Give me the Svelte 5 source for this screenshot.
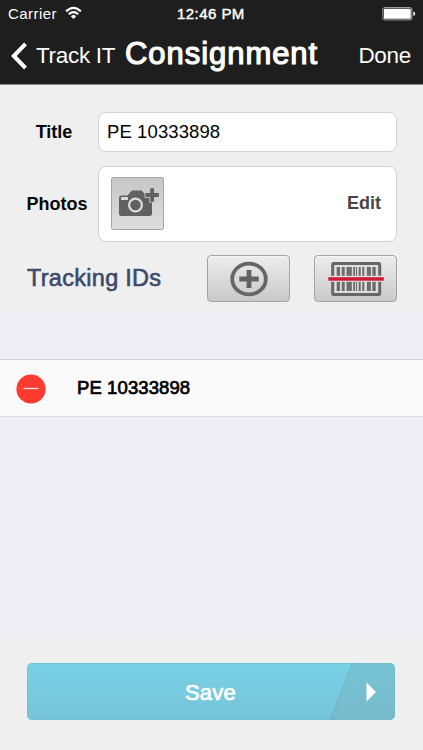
<script>
  const reference = 'PE 10333898';
  const bars = [
    [0, 3.3], [5, 3], [9.8, 5.3], [16.5, 1.8], [19.2, 1.2], [22, 2], [25.6, 2], [30.2, 4], [35.7, 3.3]
  ];
</script>

<div class="app">
  <header>
    <div class="status">
      <span class="carrier">Carrier</span>
      <svg class="wifi" width="17" height="14" viewBox="0 0 17 14">
        <g fill="none" stroke="#fff" stroke-width="2.2">
          <path d="M1.1 5.400Q8.500-1.700 15.900 5.400" />
          <path d="M3.800 8.300Q8.500 4 13.200 8.300" />
        </g>
        <path d="M5.800 10.200Q8.500 8 11.200 10.200L8.500 13Z" fill="#fff" />
      </svg>
      <span class="time">12:46 PM</span>
      <svg class="battery" width="34" height="14" viewBox="0 0 34 14">
        <rect x=".9" y=".6" width="29" height="12.3" rx="1.7" fill="none" stroke="#aaa" />
        <rect x="2" y="1.8" width="26.8" height="10" rx=".6" fill="#fff" />
        <path d="M31.4 4.500Q33.200 5 33.200 6.800T31.400 9Z" fill="#fff" />
      </svg>
    </div>
    <nav>
      <svg class="back" width="17" height="28" viewBox="0 0 17 28">
        <path d="M15.500 1.800L3.800 14L15.500 26" fill="none" stroke="#fff" stroke-width="4" />
      </svg>
      <span class="backtext">Track IT</span>
      <span class="heading">Consignment</span>
      <span class="done">Done</span>
    </nav>
  </header>

  <section class="form">
    <div class="line title">
      <span class="label">Title</span>
      <div class="field">{reference}</div>
    </div>
    <div class="line photos">
      <span class="label">Photos</span>
      <div class="field">
        <div class="camera">
          <svg width="53" height="53" viewBox="0 0 53 53">
            <path d="M10 18.500h6.500l4.500-5h9.500l4.500 4.500h4q2 0 2 2v16.500q0 2.500-2.500 2.500H10.500q-2.500 0-2.500-2.500V21q0-2.500 2-2.500Z" fill="#616161" />
            <rect x="10" y="20" width="7" height="3" rx=".5" fill="#ddd" />
            <circle cx="24.500" cy="28" r="6.400" fill="#616161" stroke="#ddd" stroke-width="2.200" />
            <path d="M39.200 11.200h3.900v4.800h4.800v3.900h-4.800v4.800h-3.900v-4.800h-4.800v-3.900h4.800Z" fill="#616161" stroke="#d0d0d0" stroke-width="1.600" paint-order="stroke" />
          </svg>
        </div>
        <span class="edit">Edit</span>
      </div>
    </div>
    <div class="line tracking">
      <span class="ids">Tracking IDs</span>
      <div class="tool">
        <svg width="40" height="36" viewBox="0 0 40 36">
          <ellipse cx="20" cy="18" rx="16.800" ry="15.400" fill="none" stroke="#666" stroke-width="3.800" />
          <path d="M20 9V27M10.300 18H29.700" stroke="#626262" stroke-width="4.800" />
        </svg>
      </div>
      <div class="tool scan">
        <svg width="58" height="36" viewBox="0 0 58 36">
          <rect x="5.700" y="2.500" width="47" height="31" rx="1" fill="#dedede" stroke="#676767" stroke-width="3" />
          {#each bars as [x, w]}
            <rect x={9.7 + x} y="6" width={w} height="24" fill="#6c6c6c" />
          {/each}
          <rect x="1" y="14.800" width="56" height="6" fill="#dedede" />
          <rect x="1.300" y="16.200" width="55.500" height="3.500" fill="#cf1935" />
        </svg>
      </div>
    </div>
  </section>

  <section class="table">
    <div class="row">
      <svg width="30" height="30" viewBox="0 0 30 30">
        <circle cx="15" cy="15" r="14.600" fill="#ff3b30" />
        <path d="M7.500 14.500H22.500" stroke="#ffe9e7" stroke-width="1.300" />
      </svg>
      <span>{reference}</span>
    </div>
  </section>

  <footer>
    <div class="save">
      <span>Save</span>
      <svg width="66" height="58" viewBox="0 0 66 58">
        <path d="M23 0H66V58H1Z" fill="#78a5ad" fill-opacity=".3" />
        <path d="M23 0L1 58" stroke="#5797a5" stroke-opacity=".3" />
        <path d="M37.500 19.500L47 29L37.500 38.500Z" fill="#fff" />
      </svg>
    </div>
  </footer>
</div>

<style>
  :global(body) { margin: 0; }
  .app {
    width: 423px; height: 750px; display: flex; flex-direction: column;
    overflow: hidden; background: #efeef4; color: #000; white-space: nowrap;
    font-family: "Liberation Sans", Arial, sans-serif;
  }
  svg { display: block; flex: none; }
  header { height: 85px; box-sizing: border-box; background: #1e1e1e; color: #fff; border-bottom: 1px solid #8a8a8a; }
  .status { height: 28px; display: flex; align-items: center; padding: 0 7px 0 8px; font-size: 15px; line-height: 28px; }
  .carrier { width: 57px; letter-spacing: .45px; }
  .wifi { margin-top: -2px; }
  .time { margin-left: 95px; letter-spacing: .45px; -webkit-text-stroke: .45px #fff; }
  .battery { margin-left: auto; }
  nav { display: flex; height: 56px; align-items: flex-start; padding: 0 12px 0 10px; }
  .back { margin-top: 14px; }
  .backtext, .done { font-size: 22.500px; line-height: 56px; }
  .backtext { width: 89px; margin-left: 9px; letter-spacing: -.3px; }
  .heading { font-size: 31px; line-height: 51px; letter-spacing: .95px; -webkit-text-stroke: 1.200px #fff; }
  .done { margin-left: auto; letter-spacing: -.3px; }
  .form { height: 227px; box-sizing: border-box; padding: 27px 26px 0; background: #efefef; }
  .line { display: flex; }
  .label { flex: none; text-align: center; font-size: 18px; font-weight: bold; color: #080808; }
  .title .label { width: 72px; margin-left: -8px; margin-right: 8px; line-height: 40px; }
  .photos .label { width: 62px; margin-right: 10px; line-height: 77px; }
  .field { box-sizing: border-box; width: 299px; background: #fff; border: 1px solid #d2d2d2; border-radius: 8px; }
  .title .field { height: 40px; padding-left: 8px; font-size: 18.500px; letter-spacing: .1px; line-height: 38px; }
  .photos { height: 76px; margin-top: 14px; }
  .photos .field { height: 76px; display: flex; align-items: center; justify-content: space-between; padding: 0 15px 2px 12px; }
  .camera { width: 51px; height: 51px; display: flex; align-items: center; justify-content: center; border: 1px solid #a6a6a6; border-radius: 2px; background: linear-gradient(#c6c6c6, #dedede); }
  .edit { font-size: 18px; font-weight: bold; color: #464646; }
  .tracking { height: 48px; margin-top: 12px; align-items: center; }
  .ids { width: 180px; margin-left: 1px; padding-top: 1px; font-size: 23.500px; letter-spacing: .28px; color: #3c4a6b; -webkit-text-stroke: .6px #3c4a6b; }
  .tool { box-sizing: border-box; width: 83px; height: 47px; display: flex; align-items: center; justify-content: center; margin-top: 1px; border: 1px solid #a5a5a5; border-radius: 4px; background: linear-gradient(#ededed, #c9c9c9); box-shadow: inset 0 1px #f5f5f5; }
  .scan { margin-left: 24px; }
  .table { height: 324px; box-sizing: border-box; padding-top: 47px; }
  .row { height: 58px; box-sizing: border-box; display: flex; align-items: center; padding-left: 15.500px; background: #fafafa; border-top: 1px solid #cfced5; border-bottom: 1px solid #dcdce0; }
  .row svg { margin-top: 2px; }
  .row span { margin-left: 31.500px; font-size: 18.500px; letter-spacing: .1px; -webkit-text-stroke: .7px #000; }
  footer { flex: 1; padding: 27px 28px 0 27px; background: linear-gradient(#efeef4, #efefef 6px); }
  .save { height: 57px; display: flex; align-items: center; justify-content: space-between; overflow: hidden; border-radius: 5px; background: linear-gradient(#78d1e5, #77c4d9); box-shadow: inset 0 0 0 1px #65b9cd66; color: #fff; }
  .save span { margin-left: 158px; padding-top: 2px; font-size: 22px; letter-spacing: .2px; -webkit-text-stroke: .7px #fff; }
</style>
